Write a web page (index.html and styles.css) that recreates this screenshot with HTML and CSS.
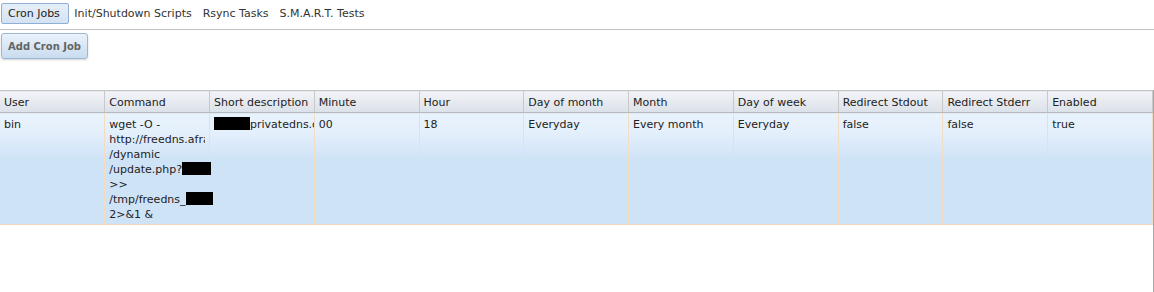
FILE: index.html
```html
<!DOCTYPE html>
<html>
<head>
<meta charset="utf-8">
<link rel="stylesheet" href="styles.css">
</head>
<body>
<div class="tabbar">
  <span class="tab tab-active">Cron Jobs</span>
  <span class="tab">Init/Shutdown Scripts</span>
  <span class="tab">Rsync Tasks</span>
  <span class="tab">S.M.A.R.T. Tests</span>
</div>
<div class="toolbar">
  <button class="btn">Add Cron Job</button>
</div>
<div class="grid">
  <table class="gtable">
    <thead>
      <tr>
        <th>User</th><th>Command</th><th>Short description</th><th>Minute</th><th>Hour</th><th>Day of month</th><th>Month</th><th>Day of week</th><th>Redirect Stdout</th><th>Redirect Stderr</th><th>Enabled</th>
      </tr>
    </thead>
    <tbody>
      <tr>
        <td>bin</td>
        <td class="cmd">
          <span class="ln">wget -O -</span>
          <span class="ln clip">http://freedns.afraid.org</span>
          <span class="ln">/dynamic</span>
          <span class="ln">/update.php?<i class="redact r1"></i></span>
          <span class="ln">&gt;&gt;</span>
          <span class="ln">/tmp/freedns_<i class="redact r2"></i></span>
          <span class="ln">2&gt;&amp;1 &amp;</span>
        </td>
        <td class="desc"><span class="ln clip"><i class="redact r3"></i>privatedns.c</span></td>
        <td>00</td>
        <td>18</td>
        <td>Everyday</td>
        <td>Every month</td>
        <td>Everyday</td>
        <td>false</td>
        <td>false</td>
        <td>true</td>
      </tr>
    </tbody>
  </table>
</div>
</body>
</html>
```
FILE: styles.css
```css
html, body {
  margin: 0;
  padding: 0;
  background: #ffffff;
}
body {
  font-family: "DejaVu Sans", Verdana, sans-serif;
  font-size: 11px;
  color: #222222;
  width: 1154px;
  height: 292px;
  overflow: hidden;
  display: flex;
  flex-direction: column;
}
.tabbar {
  display: flex;
  align-items: center;
  padding: 3px 0 5px 1px;
  border-bottom: 1px solid #c3bfc7;
  height: 21px;
}
.tab {
  display: inline-flex;
  align-items: center;
  height: 21px;
  box-sizing: border-box;
  padding: 0 5.5px;
  color: #333333;
  line-height: 13px;
}
.tab-active {
  border: 1px solid #8fb0d4;
  border-radius: 2px;
  padding: 0 8px 0 6px;
  background: linear-gradient(#e6eff8, #d3e2f2);
  color: #222222;
}
.toolbar {
  display: flex;
  padding: 3px 0 0 1px;
  height: 60px;
  box-sizing: border-box;
  align-items: flex-start;
}
.btn {
  font-family: "DejaVu Sans", Verdana, sans-serif;
  font-weight: bold;
  font-size: 10px;
  color: #646464;
  height: 26px;
  width: 87px;
  padding: 0;
  border: 1px solid #9db8d6;
  border-radius: 3px;
  background: linear-gradient(#eaf2fa, #c9dcf0);
  box-shadow: 0 1px 2px rgba(0,0,0,0.18);
}
.grid {
  flex: 1;
  border-right: 1px solid #a8a8a8;
  width: 1153px;
}
.gtable {
  width: 1153px;
  table-layout: fixed;
  border-collapse: collapse;
}
.gtable th {
  height: 22px;
  box-sizing: border-box;
  padding: 1px 4px 0 4px;
  text-align: left;
  font-weight: normal;
  color: #222222;
  background: linear-gradient(#f2f4f8, #dbe1e8);
  border-top: 1px solid #c4c4c4;
  border-bottom: 1px solid #b9b9b9;
  border-right: 1px solid #c8c8c8;
  white-space: nowrap;
  overflow: hidden;
}
.gtable td {
  vertical-align: top;
  padding: 4px 4px 2px 4px;
  line-height: 15px;
  height: 111px;
  box-sizing: border-box;
  background: linear-gradient(#e9f3fc 0px, #e3effb 20px, #cfe3f7 45px, #cfe3f7 100%);
  border-right: 1px solid #f2dcc4;
  border-bottom: 1px solid #f3d6b8;
  white-space: nowrap;
  overflow: hidden;
}
.gtable td.cmd {
  overflow: visible;
}
.ln {
  display: block;
  height: 15px;
  white-space: nowrap;
}
.clip {
  overflow: hidden;
}
.desc .clip {
  margin-right: -4px;
}
.redact {
  display: inline-block;
  background: #000000;
  height: 13px;
  vertical-align: -2px;
}
.r1 {
  width: 29px;
}
.r2 {
  width: 27px;
}
.r3 {
  width: 41px;
  margin-left: -5px;
}
```
